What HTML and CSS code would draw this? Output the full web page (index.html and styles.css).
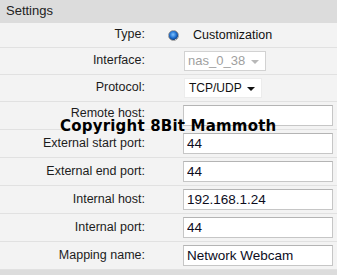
FILE: index.html
```html
<!DOCTYPE html>
<html lang="en">
  <head>
    <meta charset="UTF-8" />
    <title>Settings</title>
    <link rel="stylesheet" href="styles.css">
  </head>
  <body>
    <div class="panel">
      <div class="panel-title">Settings</div>
      <div class="form-grid">
        <div class="row row-short">
          <div class="label">Type:</div>
          <div class="value">
            <span class="radio"></span>
            <span class="radio-text">Customization</span>
          </div>
        </div>
        <div class="row row-select">
          <div class="label">Interface:</div>
          <div class="value">
            <div class="select disabled">nas_0_38<span class="arrow"></span></div>
          </div>
        </div>
        <div class="row row-select">
          <div class="label">Protocol:</div>
          <div class="value">
            <div class="select protocol">TCP/UDP<span class="arrow"></span></div>
          </div>
        </div>
        <div class="row">
          <div class="label label-top">Remote host:</div>
          <div class="value"><input class="field" type="text" value="" /></div>
        </div>
        <div class="row">
          <div class="label">External start port:</div>
          <div class="value"><input class="field" type="text" value="44" /></div>
        </div>
        <div class="row">
          <div class="label">External end port:</div>
          <div class="value"><input class="field" type="text" value="44" /></div>
        </div>
        <div class="row">
          <div class="label">Internal host:</div>
          <div class="value"><input class="field" type="text" value="192.168.1.24" /></div>
        </div>
        <div class="row">
          <div class="label">Internal port:</div>
          <div class="value"><input class="field" type="text" value="44" /></div>
        </div>
        <div class="row">
          <div class="label">Mapping name:</div>
          <div class="value"><input class="field" type="text" value="Network Webcam" /></div>
        </div>
      </div>
      <div class="panel-foot"></div>
      <div class="watermark">Copyright 8Bit Mammoth</div>
    </div>
  </body>
</html>
```

FILE: styles.css
```css
/* General styles */
body {
  margin: 0;
  background-color: #fff;
  font-family: "Liberation Sans", Arial, sans-serif;
  color: #1c1c1c;
}

.panel {
  position: relative;
  width: 337px;
  height: 275px;
  overflow: hidden;
  background-color: #f3f3f3;
}

.panel-title {
  height: 23px;
  line-height: 22px;
  padding-left: 6px;
  font-size: 13px;
  background-color: #dcdcdc;
  color: #222;
}

/* Form rows */
.row {
  display: grid;
  grid-template-columns: 160px 1fr;
  align-items: center;
  height: 27px;
  border-bottom: 1px solid #e1e1e1;
  box-sizing: border-box;
  height: 28px;
}

.row-short {
  height: 25px;
}

.row-select {
  height: 27px;
}

.label {
  text-align: right;
  padding-right: 15px;
  font-size: 12.5px;
  margin-top: -2px;
}

.label-top {
  margin-top: -5px;
}

.value {
  display: flex;
  align-items: center;
}

/* Radio */
.radio {
  width: 9px;
  height: 9px;
  margin-left: 8px;
  border: 1px solid #9a9a9a;
  border-radius: 50%;
  background: radial-gradient(circle at 45% 40%, #7ec3ff 0, #1f6fd0 45%, #10448a 70%, #dcdcdc 75%);
}

.radio-text {
  margin-left: 14px;
  font-size: 12.5px;
  color: #111;
}

/* Selects */
.select {
  position: relative;
  box-sizing: border-box;
  height: 20px;
  line-height: 18px;
  margin-left: 24px;
  padding-left: 3px;
  background-color: #fff;
}

.select.disabled {
  width: 82px;
  border: 1px solid #d2d2d2;
  color: #a0a0a0;
  font-size: 13px;
}

.select.protocol {
  width: 78px;
  border: 1px solid #ececec;
  padding-left: 4px;
  font-size: 12px;
  color: #111;
}

.arrow {
  position: absolute;
  right: 6px;
  top: 8px;
  border-left: 4px solid transparent;
  border-right: 4px solid transparent;
  border-top: 4px solid #111;
}

.select.disabled .arrow {
  border-top-color: #b8b8b8;
}

/* Text inputs */
.field {
  box-sizing: border-box;
  width: 150px;
  height: 21px;
  margin: 0 0 0 23px;
  padding: 0 3px;
  border: 1px solid #c6c6c6;
  border-top-color: #b4b4b4;
  background-color: #fff;
  font-family: "Liberation Sans", Arial, sans-serif;
  font-size: 13.5px;
  color: #0c0c1c;
  outline: none;
}

.panel-foot {
  height: 8px;
  background-color: #dcdcdc;
}

/* Watermark overlay */
.watermark {
  position: absolute;
  left: 60px;
  top: 119px;
  font-family: "DejaVu Sans", Verdana, sans-serif;
  font-weight: bold;
  font-size: 15px;
  line-height: 15px;
  letter-spacing: 0.2px;
  color: #000;
}
```
